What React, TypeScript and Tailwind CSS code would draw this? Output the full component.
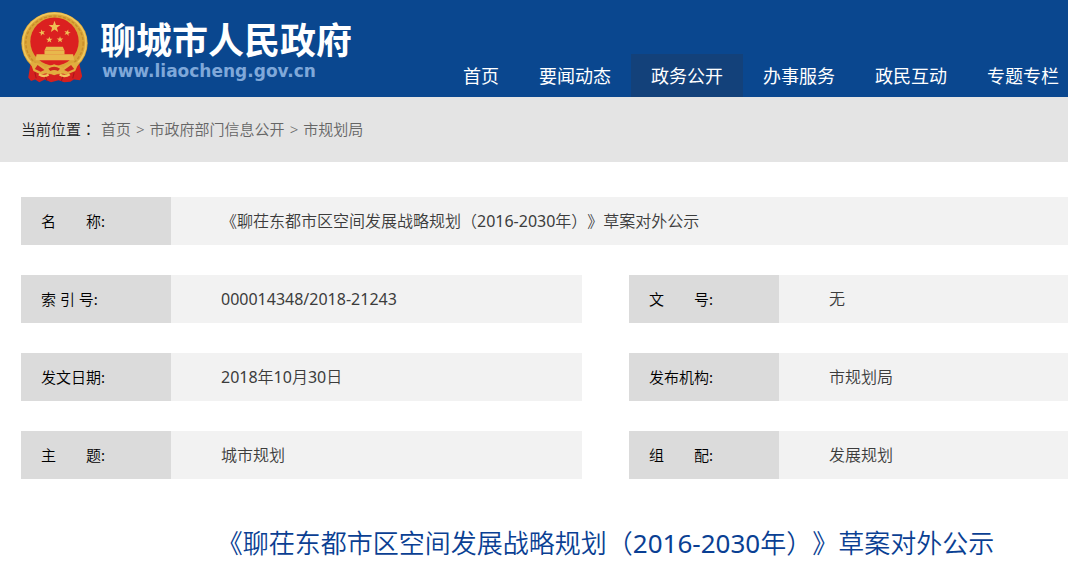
const navList = [
  { name: '首页', active: false },
  { name: '要闻动态', active: false },
  { name: '政务公开', active: true },
  { name: '办事服务', active: false },
  { name: '政民互动', active: false },
  { name: '专题专栏', active: false },
]

const crumbs = ['首页', '市政府部门信息公开', '市规划局']

const title = '《聊茌东都市区空间发展战略规划（2016-2030年）》草案对外公示'

const infoList = [
  { label: '名\u3000\u3000称:', value: title, full: true },
  { label: '索 引 号:', value: '000014348/2018-21243', full: false },
  { label: '文\u3000\u3000号:', value: '无', full: false },
  { label: '发文日期:', value: '2018年10月30日', full: false },
  { label: '发布机构:', value: '市规划局', full: false },
  { label: '主\u3000\u3000题:', value: '城市规划', full: false },
  { label: '组\u3000\u3000配:', value: '发展规划', full: false },
]

const star = 'M0 -10 L2.4 -3.2 L9.5 -3.1 L3.8 1.2 L5.9 8.1 L0 4 L-5.9 8.1 L-3.8 1.2 L-9.5 -3.1 L-2.4 -3.2 Z'

function Emblem() {
  return (
    <svg className="w-[67px] h-[72px] shrink-0" viewBox="37 34 194 212" preserveAspectRatio="none" aria-hidden="true">
      {/* ribbon ends */}
      <path d="M66 180 L58 230 L66 240 L78 236 L90 244 L106 236 L124 244 L146 238 L162 244 L180 242 L190 236 L208 238 L214 226 L204 180 Z" fill="#d5201f" />
      {/* wreath */}
      <ellipse cx="134" cy="129" rx="96" ry="92" fill="#dba538" />
      <ellipse cx="134" cy="128" rx="91" ry="87" fill="none" stroke="#f0c75c" strokeWidth="5" />
      <ellipse cx="134" cy="128" rx="83" ry="79" fill="none" stroke="#c78c2a" strokeWidth="4" strokeDasharray="9 5" />
      <ellipse cx="134" cy="124" rx="70" ry="71" fill="#db2020" />
      {/* stars */}
      <g fill="#efbe55">
        <path d={star} transform="translate(134 81) scale(1.8)" />
        <path d={star} transform="translate(98 98) rotate(-15)" />
        <path d={star} transform="translate(171 98) rotate(15)" />
        <path d={star} transform="translate(119 119)" />
        <path d={star} transform="translate(150 118)" />
      </g>
      {/* gate */}
      <g fill="#e8b84c">
        <path d="M110 139 L158 139 L163 150 L105 150 Z" />
        <path d="M105 150 H163 V162 H105 Z" />
        <path d="M82 161 H188 L191 179 H79 Z" />
      </g>
      {/* lower wreath and cog */}
      <path d="M64 185 C84 184 94 190 107 201 L133 191 L159 201 C173 189 187 184 205 185 L194 211 L168 222 L151 215 L133 223 L115 215 L96 222 L73 211 Z" fill="#e2ad3f" />
      <path d="M85 193 L105 208 L94 213 L77 205 Z M182 193 L162 208 L173 213 L191 205 Z" fill="#cf2720" />
      <path d="M116 204 Q133 193 150 204 L144 211 Q133 204 122 211 Z" fill="#ca281d" />
      <path d="M89 220 Q103 230 117 221 M149 221 Q164 230 178 220" fill="none" stroke="#f0c45c" strokeWidth="7" />
      <path d="M108 228 L112 240 M158 228 L154 240 M77 215 L81 232 M191 215 L187 232" stroke="#a8171a" strokeWidth="3" />
    </svg>
  )
}

export default function App() {
  return (
    <div className="min-h-screen bg-white overflow-hidden [text-spacing-trim:space-all] font-['Noto_Sans','Noto_Sans_CJK_SC',sans-serif]">
      <header className="h-[97px] pl-[21px] flex items-end justify-between bg-[#0a478f]">
        <a href="#" className="h-full pb-1 flex items-center gap-3">
          <Emblem />
          <div className="flex flex-col pt-2 whitespace-nowrap">
            <span className="text-[36px] leading-10 font-bold text-white">聊城市人民政府</span>
            <span className="pl-0.5 text-[17px] leading-5 font-bold text-[#7fa8d9] font-['DejaVu_Sans',sans-serif]">www.liaocheng.gov.cn</span>
          </div>
        </a>
        <nav className="flex">
          {navList.map((item) => {
            return (
              <a
                href="#"
                key={item.name}
                className={`h-[43px] px-5 last:pr-[9px] flex items-center text-lg text-white whitespace-nowrap ${item.active ? 'bg-[#13417a]' : ''}`}
              >
                {item.name}
              </a>
            )
          })}
        </nav>
      </header>

      <div className="h-[65px] pl-[21px] flex items-center gap-[5px] bg-[#e4e4e4] text-[15px] font-[350] text-[#666]">
        <span className="text-[#222] font-['Noto_Sans_CJK_TC',sans-serif]">当前位置：</span>
        {crumbs.map((name, i) => {
          return (
            <div className="flex gap-[5px]" key={name}>
              {i > 0 && <span>&gt;</span>}
              <a href="#">{name}</a>
            </div>
          )
        })}
      </div>

      <main className="pl-[21px] pt-[35px] font-['Noto_Sans','Noto_Sans_CJK_SC_DemiLight','Noto_Sans_CJK_SC',sans-serif]">
        <dl className="grid grid-cols-[23fr_18fr] gap-x-[47px] gap-y-[30px]">
          {infoList.map((item) => {
            return (
              <div className={`flex min-h-12 bg-[#f2f2f2] ${item.full ? 'col-span-2' : ''}`} key={item.label}>
                <dt className="w-[150px] shrink-0 pl-5 flex items-center bg-[#dbdbdb] text-[15px] text-black whitespace-pre">{item.label}</dt>
                <dd className="pl-[50px] flex items-center text-base text-[#3c3c3c]">{item.value}</dd>
              </div>
            )
          })}
        </dl>
        <h1 className="mt-11 ml-[122px] text-center text-[26px] leading-10 text-[#0a3f93]">{title}</h1>
      </main>
    </div>
  )
}
